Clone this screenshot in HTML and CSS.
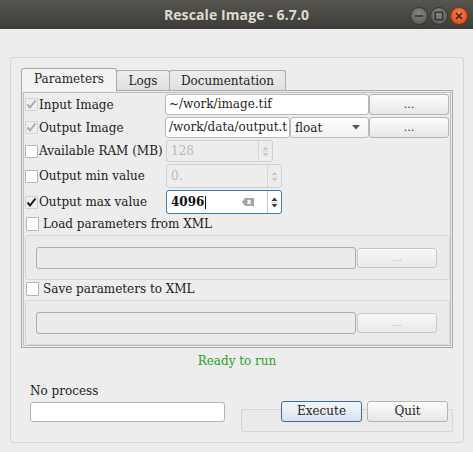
FILE: index.html
```html
<!DOCTYPE html>
<html>
<head>
<meta charset="utf-8">
<title>Rescale Image - 6.7.0</title>
<link rel="stylesheet" href="styles.css">
</head>
<body>
<div class="titlebar">
  <div></div>
  <div class="title">Rescale Image - 6.7.0</div>
  <div class="controls">
    <svg class="wbtn" width="18" height="18" viewBox="0 0 18 18"><defs><radialGradient id="g1" cx="50%" cy="35%" r="65%"><stop offset="0" stop-color="#85847f"/><stop offset="1" stop-color="#5d5c58"/></radialGradient></defs><circle cx="9" cy="9" r="8.5" fill="url(#g1)" stroke="#35342f" stroke-width="1"/><line x1="5" y1="9" x2="13" y2="9" stroke="#34332f" stroke-width="1.6"/></svg>
    <svg class="wbtn" width="18" height="18" viewBox="0 0 18 18"><circle cx="9" cy="9" r="8.5" fill="url(#g1)" stroke="#35342f" stroke-width="1"/><rect x="5.3" y="5.3" width="7.4" height="7.4" fill="none" stroke="#34332f" stroke-width="1.4"/></svg>
    <svg class="wbtn" width="18" height="18" viewBox="0 0 18 18"><defs><radialGradient id="g2" cx="50%" cy="35%" r="65%"><stop offset="0" stop-color="#f6804f"/><stop offset="1" stop-color="#de4d1b"/></radialGradient></defs><circle cx="9" cy="9" r="8.5" fill="url(#g2)" stroke="#7e2f12" stroke-width="1"/><path d="M6 6 L12 12 M12 6 L6 12" stroke="#3b1d10" stroke-width="1.5"/></svg>
  </div>
</div>

<div class="client">
  <div class="box">
    <div class="tabs">
      <div class="tab active">Parameters</div>
      <div class="tab logs">Logs</div>
      <div class="tab docs">Documentation</div>
    </div>
    <div class="pane">
      <div class="inner">
        <div class="row r1">
          <span class="cb dis"><svg width="13" height="13" viewBox="0 0 13 13"><path d="M2.5 6.5 L5 9.5 L10.5 2.5" fill="none" stroke="currentColor" stroke-width="2"/></svg></span>
          <span class="lbl">Input Image</span>
          <div class="edit e-in">~/work/image.tif</div>
          <div class="btn dots">...</div>
        </div>
        <div class="row r2">
          <span class="cb dis"><svg width="13" height="13" viewBox="0 0 13 13"><path d="M2.5 6.5 L5 9.5 L10.5 2.5" fill="none" stroke="currentColor" stroke-width="2"/></svg></span>
          <span class="lbl">Output Image</span>
          <div class="edit e-out">/work/data/output.t</div>
          <div class="combo"><span>float</span><svg width="8" height="5" viewBox="0 0 8 5"><path d="M0 0 H8 L4 4.5Z" fill="#555"/></svg></div>
          <div class="btn dots">...</div>
        </div>
        <div class="row r3">
          <span class="cb"></span>
          <span class="lbl">Available RAM (MB)</span>
          <div class="spin dis s-ram">
            <span class="val">128</span>
            <span class="arrows"><svg width="9" height="15" viewBox="0 0 9 15"><path d="M1.5 6 L4.5 2.5 L7.5 6Z M1.5 9 L4.5 12.5 L7.5 9Z" fill="currentColor"/><line x1="1" y1="7.5" x2="8" y2="7.5" stroke="#e2e2e2" stroke-width="1"/></svg></span>
          </div>
        </div>
        <div class="row r4">
          <span class="cb"></span>
          <span class="lbl">Output min value</span>
          <div class="spin dis s-val">
            <span class="val">0.</span>
            <span class="arrows"><svg width="9" height="15" viewBox="0 0 9 15"><path d="M1.5 6 L4.5 2.5 L7.5 6Z M1.5 9 L4.5 12.5 L7.5 9Z" fill="currentColor"/><line x1="1" y1="7.5" x2="8" y2="7.5" stroke="#e2e2e2" stroke-width="1"/></svg></span>
          </div>
        </div>
        <div class="row r5">
          <span class="cb on"><svg width="13" height="13" viewBox="0 0 13 13"><path d="M2.5 6.5 L5 9.5 L10.5 2.5" fill="none" stroke="currentColor" stroke-width="2"/></svg></span>
          <span class="lbl">Output max value</span>
          <div class="spin focus s-val">
            <span class="val strong">4096<span class="caret"></span></span>
            <svg class="clear" width="12" height="8" viewBox="0 0 12 8"><path d="M3 0 H12 V8 H3 L0 4Z" fill="#a3a3a3"/><path d="M5.6 2 L8.6 6 M8.6 2 L5.6 6" stroke="#fff" stroke-width="1.3"/></svg>
            <span class="arrows"><svg width="9" height="15" viewBox="0 0 9 15"><path d="M1.5 6 L4.5 2.5 L7.5 6Z M1.5 9 L4.5 12.5 L7.5 9Z" fill="currentColor"/><line x1="1" y1="7.5" x2="8" y2="7.5" stroke="#d0d0d0" stroke-width="1"/></svg></span>
          </div>
        </div>
        <div class="row xrow xr1">
          <span class="cb"></span>
          <span class="xlbl">Load parameters from XML</span>
        </div>
        <div class="group">
          <div class="gedit"></div>
          <div class="btn gbtn">...</div>
        </div>
        <div class="row xrow xr2">
          <span class="cb"></span>
          <span class="xlbl">Save parameters to XML</span>
        </div>
        <div class="group g2">
          <div class="gedit"></div>
          <div class="btn gbtn">...</div>
        </div>
      </div>
    </div>

    <div class="status">Ready to run</div>

    <div class="footer">
      <div class="proc">No process</div>
      <div></div>
      <div class="pedit"></div>
      <div class="actions">
        <div class="frame"></div>
        <div class="buttons">
          <div class="btn pbtn default">Execute</div>
          <div class="btn pbtn">Quit</div>
        </div>
      </div>
    </div>
  </div>
</div>
</body>
</html>
```

FILE: styles.css
```css
* { box-sizing: border-box; }
html, body { margin: 0; padding: 0; }
body {
  width: 473px;
  height: 452px;
  overflow: hidden;
  background: #ededed;
  font-family: "DejaVu Serif", serif;
  font-size: 12px;
  color: #1e1e1e;
}

/* title bar */
.titlebar {
  height: 29px;
  background: linear-gradient(#56554f, #3d3c38);
  display: grid;
  grid-template-columns: 1fr auto 1fr;
  align-items: center;
}
.title {
  font-family: "Open Sans", sans-serif;
  font-weight: 700;
  font-size: 14px;
  color: #dfdbd2;
  letter-spacing: 0.1px;
}
.controls {
  justify-self: end;
  display: flex;
  gap: 2px;
  margin-right: 5px;
  margin-top: 2px;
}
.wbtn { display: block; }

/* client area */
.client { padding: 28px 9px 0 10px; }
.box {
  border: 1px solid #d6d6d6;
  border-radius: 3px;
  padding: 10px 10px 10px 10px;
}

/* tabs */
.tabs {
  display: flex;
  align-items: flex-end;
  height: 22px;
  position: relative;
  z-index: 1;
}
.tab {
  height: 20px;
  border: 1px solid #adadad;
  border-bottom: none;
  border-radius: 3px 3px 0 0;
  background: linear-gradient(#ededed, #e0e0e0);
  text-align: center;
  line-height: 20px;
  color: #1e1e1e;
}
.tab.active {
  width: 96px;
  height: 23px;
  margin-bottom: -1px;
  background: #f3f3f3;
  border-color: #a7a7a7;
  line-height: 21px;
}
.tab.logs { width: 54px; margin-left: -1px; }
.tab.docs { width: 117px; margin-left: -1px; }

.pane {
  height: 258px;
  border: 1px solid #a8a8a8;
  padding: 1px;
  background: #ededed;
}
.inner {
  height: 100%;
  border: 1px solid #bdbdbd;
  display: flex;
  flex-direction: column;
  overflow: hidden;
}

/* rows */
.row { display: flex; align-items: center; flex: none; white-space: nowrap; }
.r1 { margin-top: 1px; height: 21px; }
.r2 { margin-top: 2px; height: 21px; }
.r3 { margin-top: 2px; height: 22px; }
.r4 { margin-top: 2px; height: 24px; }
.r5 { margin-top: 2px; height: 24px; }
.xr1 { margin-top: 1px; height: 18px; }
.xr2 { margin-top: 0; height: 18px; }

.cb {
  flex: none;
  width: 13px;
  height: 13px;
  margin-left: 1px;
  background: #fff;
  border: 1px solid #b4b4b4;
  border-radius: 1px;
  color: #111;
  display: flex;
}
.cb svg { margin: -1px; }
.cb.dis { background: #efefef; border-color: #d3d3d3; color: #a9a9a9; }
.cb.on { background: #ededed; border-color: #cfcfcf; color: #111; }
.xrow .cb { margin-left: 2px; width: 13px; height: 14px; }

.lbl {
  flex: none;
  width: 127px;
  padding-left: 1px;
  color: #202020;
}
.xlbl { padding-left: 4px; color: #202020; }

.edit {
  height: 100%;
  background: #fff;
  border: 1px solid #b9b9b9;
  border-radius: 3px;
  padding: 0 3px;
  line-height: 19px;
  white-space: nowrap;
  overflow: hidden;
  flex: none;
}
.e-in { width: 204px; }
.e-out { width: 125px; padding-right: 0; }

.btn {
  border: 1px solid #b3b3b3;
  border-radius: 3px;
  background: linear-gradient(#fcfcfc, #e7e7e7);
  text-align: center;
  color: #333;
  flex: none;
}
.dots { width: 80px; height: 100%; line-height: 19px; font-size: 11px; }

.combo {
  flex: none;
  width: 79px;
  height: 100%;
  border: 1px solid #bababa;
  border-radius: 3px;
  background: linear-gradient(#fdfdfd, #f2f2f2);
  display: flex;
  align-items: center;
  justify-content: space-between;
  padding: 0 8px 0 4px;
}

.spin {
  flex: none;
  display: flex;
  align-items: center;
  height: 100%;
  margin-left: 1px;
  background: #fff;
  border: 1px solid #b9b9b9;
  border-radius: 3px;
  color: #1e1e1e;
}
.s-ram { width: 107px; }
.s-val { width: 116px; }
.spin .val { flex: 1; padding-left: 4px; }
.spin .arrows {
  width: 14px;
  height: 100%;
  border-left: 1px solid #cdcdcd;
  display: flex;
  align-items: center;
  justify-content: center;
  color: #3a3a3a;
}
.spin.dis { background: #ededed; border-color: #cfcfcf; color: #b9b9b9; }
.spin.dis .arrows { color: #c9c9c9; border-left-color: #d6d6d6; }
.spin.focus { border-color: #3b7dbb; }
.spin.focus .arrows { border-left-color: #b8c8d8; }
.strong { font-weight: 700; color: #111; display: flex; align-items: center; }
.caret { display: inline-block; width: 1px; height: 13px; background: #111; margin-left: 1px; }
.clear { margin-right: 13px; }

/* xml groups */
.group {
  flex: none;
  height: 45px;
  margin: 2px 0 0 1px;
  border: 1px solid #d6d6d6;
  border-radius: 3px;
  background: #ebebeb;
  display: flex;
  align-items: center;
  padding: 0 12px 0 10px;
}
.gedit {
  flex: 1;
  height: 22px;
  border: 1px solid #acacac;
  border-radius: 3px;
  background: #ebebeb;
}
.gbtn {
  width: 80px;
  height: 20px;
  margin-left: 1px;
  border-color: #c8c8c8;
  background: linear-gradient(#f8f8f8, #e9e9e9);
  color: #b0b0b0;
  font-size: 10px;
  line-height: 18px;
}

/* status */
.status {
  text-align: center;
  color: #1fa31f;
  margin-top: 6px;
  line-height: 15px;
}

/* footer */
.footer {
  margin-left: 9px;
  display: grid;
  grid-template-columns: 195px 212px;
  column-gap: 16px;
}
.proc { margin-top: 15px; line-height: 15px; color: #202020; }
.pedit {
  margin-top: 3px;
  height: 20px;
  background: #fff;
  border: 1px solid #b4b4b4;
  border-radius: 3px;
  align-self: start;
}
.actions { display: grid; }
.frame {
  grid-area: 1 / 1;
  margin-top: 10px;
  height: 23px;
  border: 1px solid #d6d6d6;
  border-radius: 2px;
  background: #eaeaea;
}
.buttons {
  grid-area: 1 / 1;
  margin-top: 2px;
  justify-self: end;
  align-self: start;
  margin-right: 5px;
  display: flex;
  gap: 5px;
}
.pbtn { width: 81px; height: 21px; line-height: 19px; color: #1e1e1e; font-size: 12px; }
.pbtn.default {
  border-color: #3a6d9e;
  background: linear-gradient(#f4f7fa, #dae3ec);
}
```
